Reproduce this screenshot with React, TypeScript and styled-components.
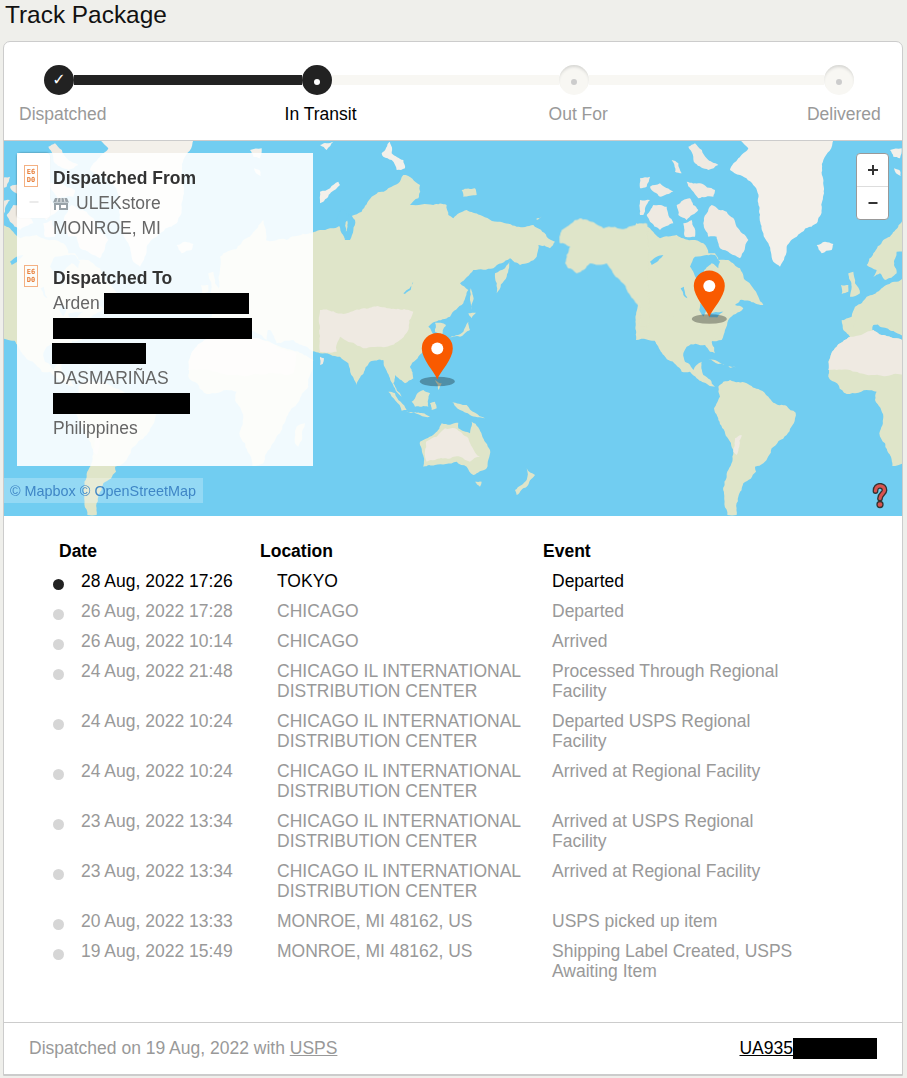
import styled, { createGlobalStyle } from "styled-components";

const GlobalStyle = createGlobalStyle`
  html, body { margin: 0; padding: 0; background: #efefeb; }
  body { font-family: "Liberation Sans", Arial, sans-serif; font-size: 17.5px; color: #333; }
`;

const Page = styled.div`
  width: 907px;
  height: 1078px;
  overflow: hidden;
`;

const Title = styled.h1`
  margin: 0;
  padding-left: 5px;
  height: 41px;
  font-size: 24.4px;
  font-weight: 400;
  line-height: 30px;
  color: #111;
`;

const Card = styled.div`
  margin-left: 3px;
  width: 898px;
  border: 1px solid #ccc;
  border-radius: 7px 7px 0 0;
  background: #fff;
`;

const Stepper = styled.div`
  height: 98px;
  padding-top: 23px;
  box-sizing: border-box;
`;

const Track = styled.div`
  display: flex;
  align-items: center;
  padding-left: 40px;
  height: 30px;
`;

const Circle = styled.div<{ $on?: boolean }>`
  flex: none;
  width: 30px;
  height: 30px;
  border-radius: 50%;
  display: flex;
  align-items: center;
  justify-content: center;
  padding-top: 4px;
  box-sizing: border-box;
  background: ${(p) => (p.$on ? "#222" : "#f8f7f3")};
  box-shadow: ${(p) => (p.$on ? "none" : "inset 0 3px 3px -1px #d6d6d3")};
`;

const Check = styled.span`
  margin-top: -4px;
  color: #fff;
  font-family: "DejaVu Sans", sans-serif;
  font-size: 16px;
  line-height: 1;
`;

const Dot = styled.span<{ $on?: boolean }>`
  width: 6px;
  height: 6px;
  border-radius: 50%;
  background: ${(p) => (p.$on ? "#fff" : "#ccc")};
`;

const Segment = styled.div<{ $w: number; $on?: boolean }>`
  flex: none;
  width: ${(p) => p.$w}px;
  height: 10px;
  margin-top: -1px;
  background: ${(p) => (p.$on ? "#222" : "#f8f7f3")};
`;

const StepLabels = styled.div`
  display: flex;
  margin-top: 9px;
`;

const StepLabel = styled.span<{ $ml: number; $on?: boolean }>`
  margin-left: ${(p) => p.$ml}px;
  line-height: 20px;
  color: ${(p) => (p.$on ? "#000" : "#999")};
`;

const MapBox = styled.div`
  position: relative;
  height: 375px;
  border-top: 1px solid #ccc;
  background: #71cdf1;
  overflow: hidden;
`;

const MapArt = styled.svg`
  display: block;
`;

const GhostControl = styled.div`
  position: absolute;
  left: 13px;
  top: 12px;
  width: 33px;
  height: 65px;
  padding-top: 33px;
  box-sizing: border-box;
  display: flex;
  align-items: center;
  justify-content: center;
  border-radius: 4px;
  background: #fff;
  box-shadow: 0 0 2px rgba(0, 0, 0, 0.5);
`;

const Panel = styled.div`
  position: absolute;
  left: 13px;
  top: 12px;
  width: 296px;
  height: 313px;
  box-sizing: border-box;
  padding: 13px 0 0 7px;
  background: rgba(255, 255, 255, 0.9);
  line-height: 25px;
  color: #666;
`;

const AddressBlock = styled.div`
  display: flex;
  gap: 15px;
  margin-bottom: 25px;
`;

const Tofu = styled.span`
  flex: none;
  width: 12px;
  height: 20px;
  margin-top: -1px;
  border: 1px solid #f4b183;
  display: flex;
  flex-direction: column;
  align-items: center;
  justify-content: center;
  font-size: 7px;
  font-family: "DejaVu Sans Mono", monospace;
  font-weight: 700;
  line-height: 8px;
  color: #e8803c;
`;

const AddressTitle = styled.div`
  font-weight: 700;
  color: #333;
`;

const StoreLine = styled.div`
  display: flex;
  align-items: center;
  gap: 7px;
`;

const Redact = styled.span<{ $w: number; $ml?: number }>`
  display: inline-block;
  width: ${(p) => p.$w}px;
  height: 21px;
  margin-left: ${(p) => p.$ml ?? 0}px;
  background: #000;
  vertical-align: middle;
`;

const RedactLine = styled.div`
  display: flex;
  align-items: center;
  height: 25px;
`;

const Attribution = styled.div`
  position: absolute;
  left: 0;
  top: 337px;
  padding: 0 7px 0 6px;
  height: 25px;
  line-height: 26px;
  font-size: 14.4px;
  color: #3f86c6;
  background: rgba(255, 255, 255, 0.25);
`;

const ZoomControl = styled.div`
  position: absolute;
  left: 852px;
  top: 12px;
  width: 31px;
  border: 1px solid #999;
  border-radius: 4px;
  background: #fff;
`;

const ZoomButton = styled.div<{ $top?: boolean }>`
  height: 32px;
  display: flex;
  align-items: center;
  justify-content: center;
  border-bottom: ${(p) => (p.$top ? "1px solid #ddd" : "none")};
`;

const Help = styled.svg`
  position: absolute;
  left: 868px;
  top: 342px;
`;

const Events = styled.div`
  height: 507px;
  box-sizing: border-box;
  padding-top: 25px;
  border-bottom: 1px solid #ccc;
`;

const HeadRow = styled.div`
  display: grid;
  grid-template-columns: 201px 283px 1fr;
  padding-left: 55px;
  margin-bottom: 10px;
  line-height: 20px;
  font-weight: 700;
  color: #000;
`;

const EventRow = styled.div<{ $on?: boolean }>`
  display: grid;
  grid-template-columns: 28px 196px 275px 250px;
  padding-left: 49px;
  padding-bottom: 10px;
  line-height: 20px;
  color: ${(p) => (p.$on ? "#000" : "#999")};
`;

const Bullet = styled.span<{ $on?: boolean }>`
  width: 11px;
  height: 11px;
  margin-top: 8px;
  border-radius: 50%;
  background: ${(p) => (p.$on ? "#222" : "#d6d6d6")};
`;

const Footer = styled.div`
  height: 51px;
  display: flex;
  align-items: center;
  justify-content: space-between;
  padding: 0 25px;
  border-bottom: 1px solid #ccc;
  color: #999;
`;

const FooterLink = styled.a`
  color: inherit;
  text-decoration: underline;
`;

const Tracking = styled.span`
  display: flex;
  align-items: center;
  color: #000;
  text-decoration: underline;
`;

const WATER = "#71cdf1";
const GREEN = "#dfe5c9";
const PALE = "#efeae2";
const ICE = "#f3f0ea";

type Shape = [string, string];

// coordinates are 3x crop pixels, each group says where its crop starts
const canadaShapes: Shape[] = [
  [GREEN, "-12,250 30,265 60,295 110,285 130,295 165,300 190,310 205,340 225,340 235,360 265,360 300,385 315,420 355,470 370,495 335,487 300,480 285,495 310,505 265,540 255,570 245,600 -12,600"],
  [WATER, "150,380 165,350 200,345 225,345 240,365 235,385 215,370 190,400 192,440 172,420 160,395"],
  [WATER, "30,365 50,350 70,345 55,362 35,375"],
  [WATER, "122,445 132,440 142,475 130,465"],
  [WATER, "180,490 200,500 190,530 178,510"],
  [WATER, "205,520 250,515 225,540 205,540"],
  [PALE, "190,250 215,195 260,215 290,260 325,300 300,355 270,340 240,325 230,290 205,290"],
  [PALE, "20,225 40,195 80,200 100,250 60,270 30,245"],
  [PALE, "110,195 150,175 175,210 140,240 115,225"],
  [PALE, "30,140 60,130 100,155 60,170"],
  [PALE, "140,125 180,130 225,150 220,170 175,175 155,150"],
  [PALE, "145,20 165,10 200,55 235,75 205,90 165,70"],
  [PALE, "95,60 115,70 125,100 105,95"],
  [PALE, "0,115 30,110 20,140 0,145"],
  [PALE, "0,180 30,180 10,225 0,225"],
  [PALE, "130,250 155,240 165,290 135,290"],
  [ICE, "300,0 580,0 550,60 548,110 552,160 530,250 470,290 440,320 420,380 400,365 385,310 370,280 355,190 345,140 300,105 270,90 295,55 325,25"],
  [ICE, "750,30 785,25 780,55 760,50"],
  [ICE, "762,85 778,90 782,108 768,100"],
  [ICE, "530,315 555,305 580,312 575,330 545,340"],
  [GREEN, "625,400 640,395 645,430 660,460 630,470 635,440"],
  [GREEN, "603,435 625,435 625,455 605,462"],
  [GREEN, "680,375 700,340 730,300 790,240 800,330 770,335 762,375 770,400 735,420 720,400 700,410 710,390"],
  [GREEN, "605,545 635,530 645,500 680,470 720,450 800,410 800,600 735,560 700,555 700,590 640,600 610,570"],
];

const americasShapes: Shape[] = [
  [GREEN, "-12,-10 260,-10 245,35 215,65 225,100 210,95 195,75 140,80 130,100 135,125 160,150 185,125 190,165 225,200 205,195 170,175 150,155 125,155 85,120 60,90 30,50 0,20"],
  [WATER, "38,62 44,62 66,108 60,108"],
  [GREEN, "205,118 225,120 255,135 235,132"],
  [GREEN, "265,138 288,142 270,143"],
  [GREEN, "235,200 250,185 270,180 320,190 360,210 385,230 400,248 440,258 467,278 465,295 440,345 395,385 370,430 345,440 348,455 310,490 295,530 290,585 262,585 252,520 265,450 280,395 235,300 222,265 240,230"],
  [PALE, "285,355 305,345 298,380 290,405 280,395"],
  [GREEN, "605,0 650,0 640,25 612,28"],
  [GREEN, "700,0 740,0 760,30 720,20"],
  [GREEN, "565,125 590,80 640,50 700,30 786,60 940,120 925,200 860,290 840,340 790,430 757,438 735,370 718,340 730,290 705,240 710,215 680,210 612,218 565,170"],
  [PALE, "566,125 590,80 640,50 700,30 786,60 890,100 880,160 700,165 590,150 565,150"],
  [GREEN, "890,320 915,310 895,380 885,370"],
];

const alaskaShapes: Shape[] = [
  [GREEN, "725,270 780,235 850,265 920,265 960,250 980,250 980,560 955,560 960,500 900,420 860,370 810,370 770,400 745,385 735,370 750,320 720,310"],
];

const asiaShapes: Shape[] = [
  [GREEN, "-300,350 -200,300 -100,300 0,270 30,265 70,250 125,215 155,170 235,130 250,105 300,135 295,175 270,195 340,195 380,195 385,225 400,235 440,210 480,225 540,245 590,260 640,255 680,290 705,305 690,325 655,315 650,350 600,375 570,355 520,385 460,390 420,430 445,450 430,490 390,530 345,545 325,560 345,585 320,600 305,640 270,680 280,715 255,730 225,705 220,730 245,770 225,745 190,660 150,665 110,735 85,670 60,650 0,640 -40,620 -80,600 -130,610 -150,570 -300,540"],
  [PALE, "0,510 80,520 130,505 280,515 265,570 240,600 200,620 130,625 60,590 50,635 0,635"],
  [PALE, "0,650 12,655 8,672 0,675"],
  [WATER, "250,460 280,425 272,450 255,462"],
  [WATER, "50,250 65,205 80,215 75,300 65,280"],
  [WATER, "85,220 105,240 90,300 75,300"],
  [GREEN, "525,400 555,385 570,355 560,410 530,460"],
  [GREEN, "385,595 430,575 445,545 450,570 420,590"],
  [GREEN, "445,520 468,518 455,535"],
  [GREEN, "452,445 460,480 455,510 450,480"],
  [GREEN, "345,548 378,555 365,590 345,575"],
  [GREEN, "275,785 310,750 330,760 325,800 285,800"],
  [GREEN, "205,755 225,760 260,810 245,812"],
  [GREEN, "258,815 330,830 300,825"],
  [GREEN, "330,790 345,785 350,805 335,810"],
  [GREEN, "395,785 440,795 495,835 450,825 420,810"],
  [GREEN, "345,720 365,730 355,750"],
  [GREEN, "300,905 345,880 365,850 415,848 415,865 450,880 455,845 510,930 500,985 460,1005 440,980 410,965 345,975 310,980"],
  [PALE, "318,905 350,890 375,865 405,865 445,895 480,950 450,965 420,950 345,960 320,965"],
  [GREEN, "465,1025 485,1025 480,1040"],
  [GREEN, "620,985 645,1005 620,1040 590,1065 585,1050 620,1020"],
  [ICE, "0,155 55,125 60,135 10,185 0,190"],
  [ICE, "185,40 210,5 215,40 250,60 255,85 230,90 215,60 190,50"],
  [GREEN, "425,150 465,145 470,165 430,170"],
  [GREEN, "650,235 665,230 650,240"],
  [ICE, "0,15 40,5 20,30"],
];

// coastlines were sketched with few points, this breaks up the long straight edges
const noise = (x: number, y: number) => {
  const n = Math.sin(x * 12.9898 + y * 78.233) * 43758.5453;
  return n - Math.floor(n) - 0.5;
};

const splitEdge = (a: number[], b: number[]): number[][] => {
  const dx = b[0] - a[0];
  const dy = b[1] - a[1];
  const len = Math.hypot(dx, dy);
  if (len < 9) return [a];
  const amount = Math.min(len * 0.22, 12) * noise(a[0] + b[0], a[1] + b[1]);
  const mid = [(a[0] + b[0]) / 2 - (dy / len) * amount, (a[1] + b[1]) / 2 + (dx / len) * amount];
  return [...splitEdge(a, mid), ...splitEdge(mid, b)];
};

const roughen = (points: string) => {
  const pts = points.split(" ").map((p) => p.split(",").map(Number));
  return pts
    .flatMap((p, i) => splitEdge(p, pts[(i + 1) % pts.length]))
    .map((p) => `${p[0].toFixed(1)},${p[1].toFixed(1)}`)
    .join(" ");
};

const LandGroup = ({ x, y, shapes }: { x: number; y: number; shapes: Shape[] }) => (
  <g transform={`translate(${x} ${y}) scale(${1 / 3})`}>
    {shapes.map(([fill, points]) => (
      <polygon key={points} points={roughen(points)} fill={fill} />
    ))}
  </g>
);

const Pin = ({ x, y }: { x: number; y: number }) => (
  <g transform={`translate(${x} ${y})`}>
    <ellipse cx="0" cy="2" rx="17.5" ry="4.8" fill="#000" fillOpacity="0.3" />
    <path d="M0 0C-3-8-15.5-20-15.5-31A15.5 15.5 0 1 1 15.5-31C15.5-20 3-8 0 0Z" fill="#f95a00" />
    <circle cx="0" cy="-31" r="6" fill="#fff" />
  </g>
);

const WorldMap = () => (
  <MapArt width="898" height="375" viewBox="4 141 898 375">
    <filter id="soft">
      <feGaussianBlur stdDeviation="0.35" />
    </filter>
    <g filter="url(#soft)">
      {[0, -640].map((dx) => (
        <g key={dx} transform={`translate(${dx} 0)`}>
          <LandGroup x={640} y={140} shapes={canadaShapes} />
          <LandGroup x={640} y={320} shapes={americasShapes} />
        </g>
      ))}
      <LandGroup x={320} y={140} shapes={alaskaShapes} />
      <LandGroup x={320} y={140} shapes={asiaShapes} />
    </g>
    <Pin x={437.3} y={379.5} />
    <Pin x={709.3} y={317} />
  </MapArt>
);

const StoreIcon = () => (
  <svg width="16" height="13" viewBox="0 0 16 13">
    <path d="M2 1h12l2 4.5H0Z" fill="#98a2a8" />
    <path d="M1 6h14v7H1Z" fill="#98a2a8" />
    <path d="M3 8h3v5H3ZM8 8h5v3H8Z" fill="#fff" />
    <path d="M5 1 4 5M8 1v4M11 1l1 4" stroke="#fff" strokeWidth="0.8" />
  </svg>
);

const HelpIcon = () => (
  <Help width="16" height="26" viewBox="0 0 16 26">
    <path d="M3.5 8C3.5 4.5 5.5 2.8 8 2.8S12.5 4.5 12.5 7.2C12.5 10.5 8 11 8 15.5" fill="none" stroke="#333" strokeWidth="5.8" strokeLinecap="round" />
    <circle cx="8" cy="21.5" r="3" fill="#d9534f" stroke="#333" strokeWidth="1.3" />
    <path d="M3.5 8C3.5 4.5 5.5 2.8 8 2.8S12.5 4.5 12.5 7.2C12.5 10.5 8 11 8 15.5" fill="none" stroke="#d9534f" strokeWidth="3.2" strokeLinecap="round" />
  </Help>
);

const PlusIcon = ({ minus }: { minus?: boolean }) => (
  <svg width="12" height="12" viewBox="0 0 12 12">
    <path d={minus ? "M1.5 6h9" : "M1 6h10M6 1v10"} stroke="#333" strokeWidth="2" />
  </svg>
);

type EventItem = { date: string; place: string[]; text: string; on?: boolean };

const CHICAGO_IL = ["CHICAGO IL INTERNATIONAL", "DISTRIBUTION CENTER"];

const events: EventItem[] = [
  { date: "28 Aug, 2022 17:26", place: ["TOKYO"], text: "Departed", on: true },
  { date: "26 Aug, 2022 17:28", place: ["CHICAGO"], text: "Departed" },
  { date: "26 Aug, 2022 10:14", place: ["CHICAGO"], text: "Arrived" },
  { date: "24 Aug, 2022 21:48", place: CHICAGO_IL, text: "Processed Through Regional Facility" },
  { date: "24 Aug, 2022 10:24", place: CHICAGO_IL, text: "Departed USPS Regional Facility" },
  { date: "24 Aug, 2022 10:24", place: CHICAGO_IL, text: "Arrived at Regional Facility" },
  { date: "23 Aug, 2022 13:34", place: CHICAGO_IL, text: "Arrived at USPS Regional Facility" },
  { date: "23 Aug, 2022 13:34", place: CHICAGO_IL, text: "Arrived at Regional Facility" },
  { date: "20 Aug, 2022 13:33", place: ["MONROE, MI 48162, US"], text: "USPS picked up item" },
  { date: "19 Aug, 2022 15:49", place: ["MONROE, MI 48162, US"], text: "Shipping Label Created, USPS Awaiting Item" },
];

export default function App() {
  return (
    <Page>
      <GlobalStyle />
      <Title>Track Package</Title>
      <Card>
        <Stepper>
          <Track>
            <Circle $on>
              <Check>✓</Check>
            </Circle>
            <Segment $w={228} $on />
            <Circle $on>
              <Dot $on />
            </Circle>
            <Segment $w={227} />
            <Circle>
              <Dot />
            </Circle>
            <Segment $w={235} />
            <Circle>
              <Dot />
            </Circle>
          </Track>
          <StepLabels>
            <StepLabel $ml={15}>Dispatched</StepLabel>
            <StepLabel $ml={178} $on>In Transit</StepLabel>
            <StepLabel $ml={192}>Out For</StepLabel>
            <StepLabel $ml={199}>Delivered</StepLabel>
          </StepLabels>
        </Stepper>
        <MapBox>
          <WorldMap />
          <GhostControl>
            <PlusIcon minus />
          </GhostControl>
          <Panel>
            <AddressBlock>
              <Tofu>
                <span>E6</span>
                <span>D0</span>
              </Tofu>
              <div>
                <AddressTitle>Dispatched From</AddressTitle>
                <StoreLine>
                  <StoreIcon />
                  ULEKstore
                </StoreLine>
                <div>MONROE, MI</div>
              </div>
            </AddressBlock>
            <AddressBlock>
              <Tofu>
                <span>E6</span>
                <span>D0</span>
              </Tofu>
              <div>
                <AddressTitle>Dispatched To</AddressTitle>
                <RedactLine>
                  Arden
                  <Redact $w={145} $ml={4} />
                </RedactLine>
                <RedactLine>
                  <Redact $w={199} />
                </RedactLine>
                <RedactLine>
                  <Redact $w={94} $ml={-1} />
                </RedactLine>
                <div>DASMARIÑAS</div>
                <RedactLine>
                  <Redact $w={137} />
                </RedactLine>
                <div>Philippines</div>
              </div>
            </AddressBlock>
          </Panel>
          <Attribution>© Mapbox © OpenStreetMap</Attribution>
          <ZoomControl>
            <ZoomButton $top>
              <PlusIcon />
            </ZoomButton>
            <ZoomButton>
              <PlusIcon minus />
            </ZoomButton>
          </ZoomControl>
          <HelpIcon />
        </MapBox>
        <Events>
          <HeadRow>
            <span>Date</span>
            <span>Location</span>
            <span>Event</span>
          </HeadRow>
          {events.map((item, i) => (
            <EventRow key={i} $on={item.on}>
              <Bullet $on={item.on} />
              <span>{item.date}</span>
              <div>
                {item.place.map((line) => (
                  <div key={line}>{line}</div>
                ))}
              </div>
              <span>{item.text}</span>
            </EventRow>
          ))}
        </Events>
        <Footer>
          <span>
            Dispatched on 19 Aug, 2022 with <FooterLink>USPS</FooterLink>
          </span>
          <Tracking>
            UA935
            <Redact $w={84} />
          </Tracking>
        </Footer>
      </Card>
    </Page>
  );
}
